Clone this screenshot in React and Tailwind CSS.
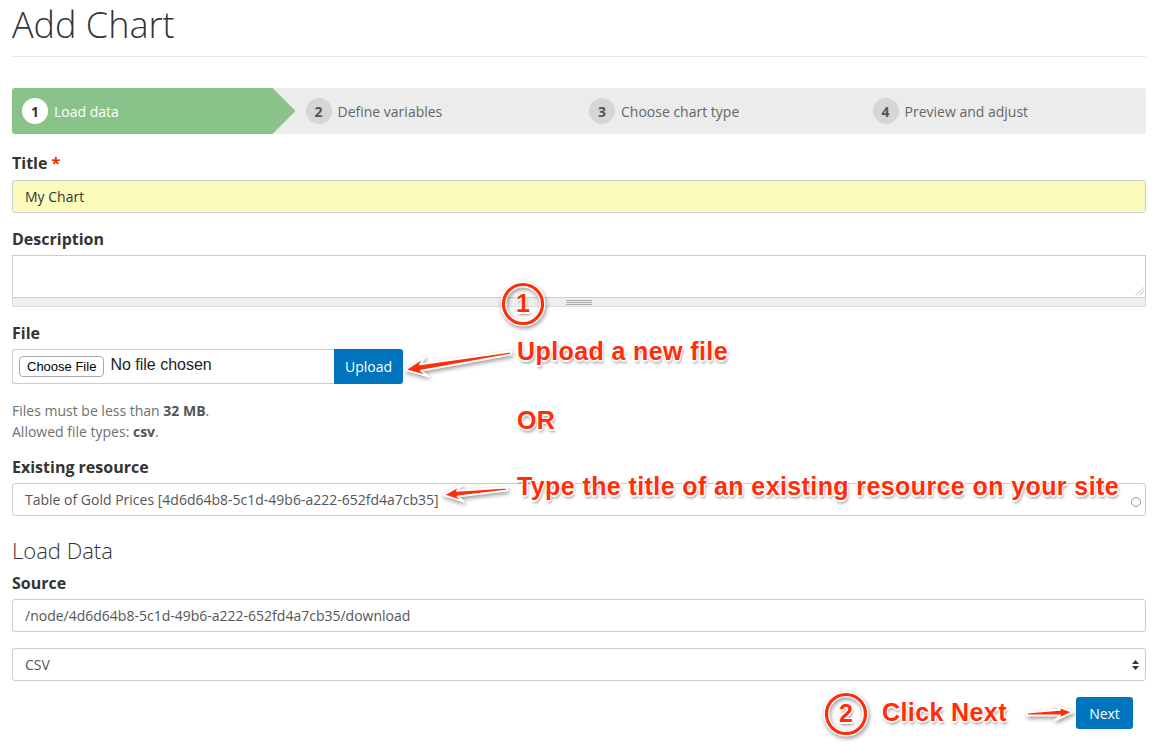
import React from "react";

const RED = "#ff2d0a";

function arrowPoints(x1, y1, x2, y2, head, hw, tail, shaft) {
  const dx = x2 - x1;
  const dy = y2 - y1;
  const L = Math.hypot(dx, dy);
  const ux = dx / L;
  const uy = dy / L;
  const px = -uy;
  const py = ux;
  const jx = x2 - ux * head * 0.72;
  const jy = y2 - uy * head * 0.72;
  const bx = x2 - ux * head;
  const by = y2 - uy * head;
  const pts = [
    [x1 + px * tail, y1 + py * tail],
    [jx + px * shaft, jy + py * shaft],
    [bx + px * hw, by + py * hw],
    [x2, y2],
    [bx - px * hw, by - py * hw],
    [jx - px * shaft, jy - py * shaft],
    [x1 - px * tail, y1 - py * tail],
  ];
  return pts.map((p) => p[0].toFixed(1) + "," + p[1].toFixed(1)).join(" ");
}

function Label({ children, className = "" }) {
  return (
    <div className={"text-[16px] leading-[20px] font-bold text-[#333] " + className}>
      {children}
    </div>
  );
}

function Step({ n, label, active }) {
  return (
    <div
      className={
        "flex items-center h-full pl-[10px] " +
        (active
          ? "bg-[#89c38a] rounded-l-[3px] [clip-path:polygon(0_0,calc(100%-23px)_0,100%_50%,calc(100%-23px)_100%,0_100%)]"
          : "")
      }
    >
      <div
        className={
          "w-[26px] h-[26px] rounded-full flex items-center justify-center text-[14px] font-bold " +
          (active ? "bg-white text-[#333]" : "bg-[#d6d6d6] text-[#555]")
        }
      >
        {n}
      </div>
      <div className={"ml-[6px] text-[14px] " + (active ? "text-white" : "text-[#666]")}>
        {label}
      </div>
    </div>
  );
}

const annot =
  "absolute text-[25px] leading-[25px] font-bold tracking-[0.4px] text-[#ff2d0a] whitespace-nowrap [font-family:'Liberation_Sans',Arial,sans-serif] [text-shadow:-1px_-1px_0_#fff,1px_-1px_0_#fff,-1px_1px_0_#fff,1px_1px_0_#fff,0_2px_0_#fff,1px_3px_3px_rgba(0,0,0,0.45)]";

export default function App() {
  return (
    <div className="relative w-[1158px] min-h-[744px] bg-white px-[12px] [font-family:'Open_Sans',sans-serif] text-[#333]">
      <h1 className="pt-[5px] pb-[11px] border-b border-[#e8e8e8] text-[36px] leading-[40px] font-light text-[#333]">
        Add Chart
      </h1>

      <div className="mt-[31px] h-[46px] grid grid-cols-4 bg-[#ececec] rounded-[3px]">
        <Step n="1" label="Load data" active />
        <Step n="2" label="Define variables" />
        <Step n="3" label="Choose chart type" />
        <Step n="4" label="Preview and adjust" />
      </div>

      <Label className="mt-[19px]">
        Title <span className="text-[#ee2a00]">*</span>
      </Label>
      <div className="mt-[7px] h-[33px] flex items-center px-[12px] bg-[#fbfcbc] border border-[#cccccc] rounded-[3px] text-[14px] text-[#333]">
        My Chart
      </div>

      <Label className="mt-[16px]">Description</Label>
      <div className="mt-[6px]">
        <div className="relative h-[43px] border border-[#cccccc] bg-white">
          <svg className="absolute right-[1px] bottom-[1px]" width="9" height="9" viewBox="0 0 9 9">
            <line x1="8.5" y1="1" x2="1" y2="8.5" stroke="#777" strokeWidth="1" strokeDasharray="1 1" />
            <line x1="8.5" y1="4.5" x2="4.5" y2="8.5" stroke="#777" strokeWidth="1" strokeDasharray="1 1" />
          </svg>
        </div>
        <div className="h-[9px] bg-[#eeeeee] border border-t-0 border-[#dddddd] flex items-center justify-center">
          <div className="w-[26px] flex flex-col gap-[1px]">
            <div className="h-[1px] bg-[#aaa]" />
            <div className="h-[1px] bg-[#aaa]" />
            <div className="h-[1px] bg-[#aaa]" />
          </div>
        </div>
      </div>

      <Label className="mt-[16px]">File</Label>
      <div className="mt-[6px] w-[391px] h-[35px] flex">
        <div className="flex-1 flex items-center pl-[6px] border border-r-0 border-[#cccccc] rounded-l-[3px] [font-family:'Liberation_Sans',Arial,sans-serif]">
          <div className="h-[21px] px-[7px] flex items-center border border-[#aaaaaa] rounded-[4px] bg-white text-[13px] text-black">
            Choose File
          </div>
          <div className="ml-[6px] text-[16px] text-[#222] -mt-[4px]">No file chosen</div>
        </div>
        <div className="w-[69px] flex items-center justify-center bg-[#0074bd] text-white text-[14px] rounded-r-[3px]">
          Upload
        </div>
      </div>

      <div className="mt-[16px] text-[14px] leading-[21px] text-[#707070]">
        <div>
          Files must be less than <strong className="font-bold text-[#555]">32 MB</strong>.
        </div>
        <div>
          Allowed file types: <strong className="font-bold text-[#555]">csv</strong>.
        </div>
      </div>

      <Label className="mt-[15px]">Existing resource</Label>
      <div className="mt-[6px] h-[33px] flex items-center justify-between pl-[12px] pr-[4px] border border-[#cccccc] rounded-[3px] text-[14px] text-[#555]">
        <span>Table of Gold Prices [4d6d64b8-5c1d-49b6-a222-652fd4a7cb35]</span>
        <div className="mt-[4px] w-[10px] h-[10px] rounded-full border-[1.5px] border-[#999]" />
      </div>

      <h2 className="mt-[21px] text-[22px] leading-[26px] font-light text-[#333]">Load Data</h2>

      <Label className="mt-[10px]">Source</Label>
      <div className="mt-[6px] h-[33px] flex items-center pl-[12px] border border-[#cccccc] rounded-[3px] text-[14px] text-[#555]">
        /node/4d6d64b8-5c1d-49b6-a222-652fd4a7cb35/download
      </div>

      <div className="mt-[16px] h-[33px] flex items-center justify-between pl-[12px] pr-[6px] border border-[#cccccc] rounded-[3px] text-[14px] text-[#555]">
        <span>CSV</span>
        <svg width="7" height="12" viewBox="0 0 7 12">
          <polygon points="3.5,1 7,5 0,5" fill="#333" />
          <polygon points="0,7 7,7 3.5,11" fill="#333" />
        </svg>
      </div>

      <div className="mt-[16px] flex justify-end pr-[13px]">
        <div className="w-[57px] h-[32px] flex items-center justify-center bg-[#0074bd] text-white text-[14px] rounded-[3px]">
          Next
        </div>
      </div>

      {/* annotations */}
      <svg
        className="absolute left-0 top-0 pointer-events-none [filter:drop-shadow(1px_2px_2px_rgba(0,0,0,0.4))]"
        width="1158"
        height="744"
      >
        <g stroke="#fff" strokeWidth="2" strokeLinejoin="round">
          <polygon points={arrowPoints(511, 353, 405, 370, 22, 10, 1.6, 3.2)} fill={RED} />
          <polygon points={arrowPoints(507, 489, 443, 495, 20, 8.5, 1.5, 3)} fill={RED} />
          <polygon points={arrowPoints(1027, 714, 1073, 712, 18, 7.5, 1.4, 2.8)} fill={RED} />
        </g>
        <circle cx="523" cy="304" r="19.5" fill="none" stroke="#fff" strokeWidth="6" />
        <circle cx="523" cy="304" r="19.5" fill="none" stroke={RED} strokeWidth="3.2" />
        <circle cx="846" cy="714" r="19.5" fill="none" stroke="#fff" strokeWidth="6" />
        <circle cx="846" cy="714" r="19.5" fill="none" stroke={RED} strokeWidth="3.2" />
      </svg>

      <div className={annot + " left-[515px] top-[291px] w-[16px] text-center tracking-normal"}>1</div>
      <div className={annot + " left-[838px] top-[701px] w-[16px] text-center tracking-normal"}>2</div>
      <div className={annot + " left-[517px] top-[339px]"}>Upload a new file</div>
      <div className={annot + " left-[517px] top-[408px]"}>OR</div>
      <div className={annot + " left-[517px] top-[474px]"}>
        Type the title of an existing resource on your site
      </div>
      <div className={annot + " left-[882px] top-[700px]"}>Click Next</div>
    </div>
  );
}
